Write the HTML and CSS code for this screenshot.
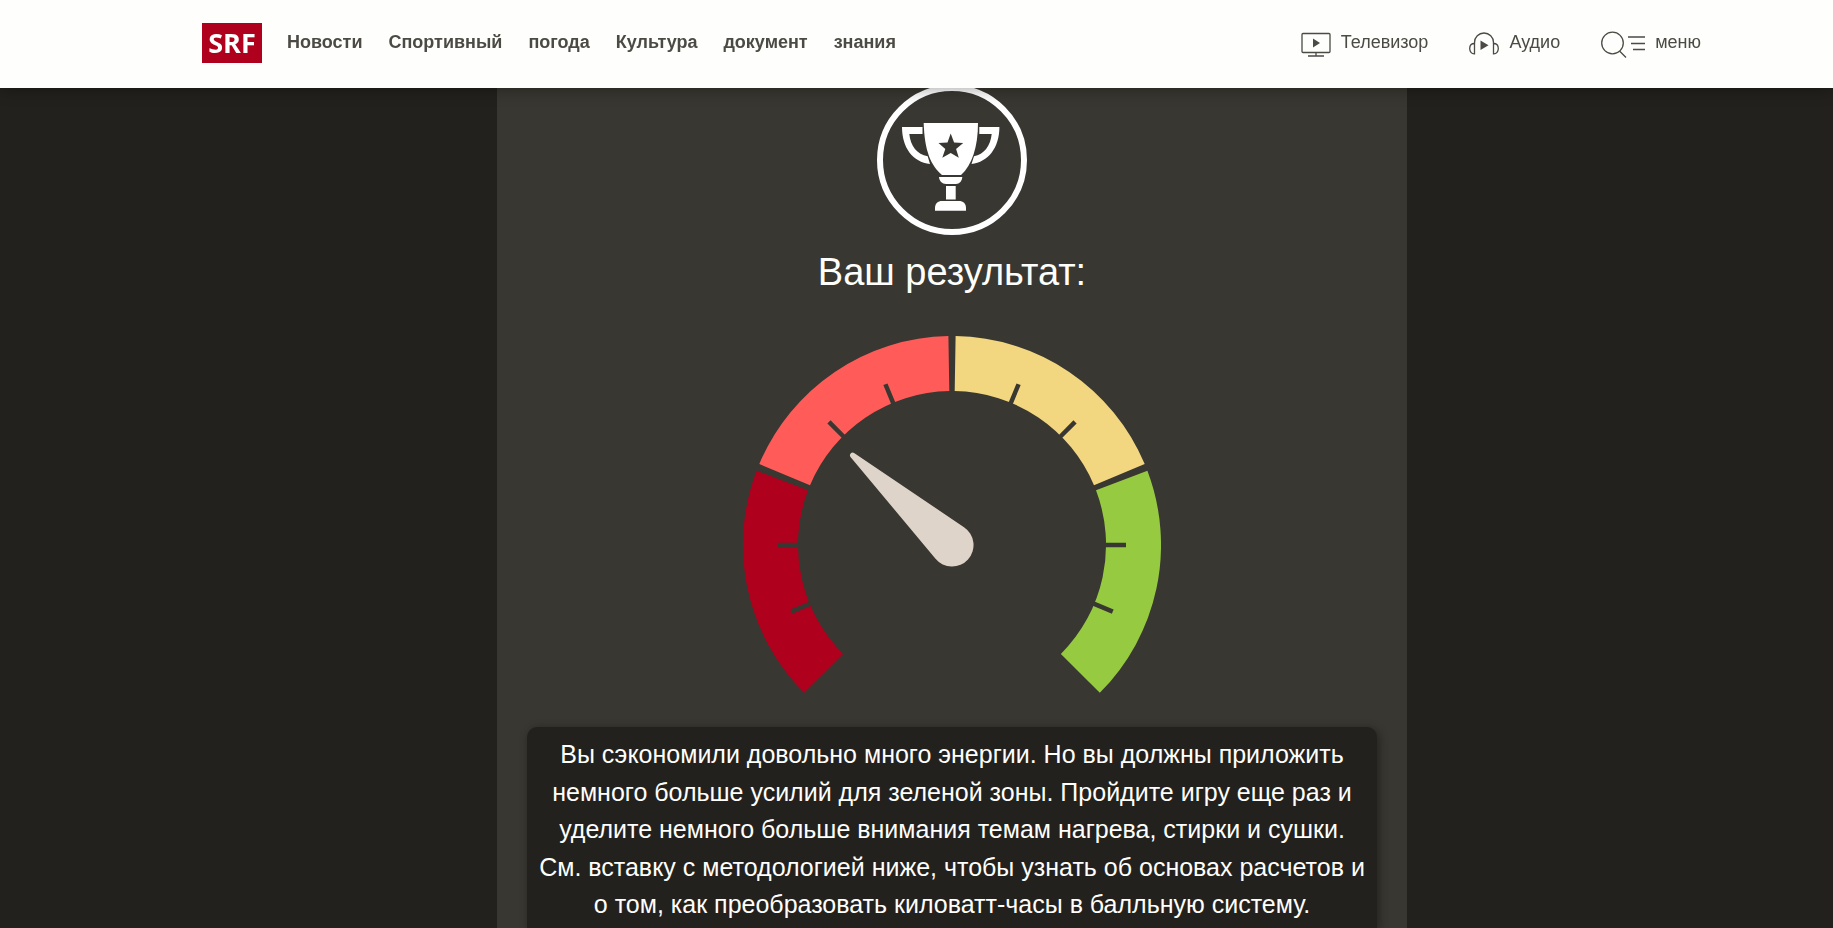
FILE: index.html
```
<!DOCTYPE html>
<html lang="ru">
  <head>
    <meta charset="UTF-8" />
    <meta name="viewport" content="width=device-width, initial-scale=1.0" />
    <title>SRF - Ваш результат</title>
    <link rel="stylesheet" href="styles.css">
  </head>
  <body>
    <header class="header">
      <div class="header-inner">
        <a class="logo" href="#">SRF</a>
        <nav class="main-nav">
          <a href="#">Новости</a>
          <a href="#">Спортивный</a>
          <a href="#">погода</a>
          <a href="#">Культура</a>
          <a href="#">документ</a>
          <a href="#">знания</a>
        </nav>
        <div class="tools">
          <a class="tool" href="#">
            <svg width="30" height="28" viewBox="0 0 30 28" fill="none" stroke="currentColor" stroke-width="1.300">
              <rect x="1" y="3.500" width="28" height="19" rx="1" />
              <path d="M15 22.500v3.500M7 26h16" />
              <path d="M12 8.500v9l7-4.500z" fill="currentColor" stroke="none" />
            </svg>
            <span>Телевизор</span>
          </a>
          <a class="tool" href="#">
            <svg width="30" height="28" viewBox="0 0 30 28" fill="none" stroke="currentColor" stroke-width="1.300">
              <path d="M5.500 13.500v-1a9.500 9.500 0 0 1 19 0v1" />
              <path d="M5.500 13.500v10.300C2.500 24 .7 21.500 .7 18.600s1.800-5.100 4.800-5.100z" />
              <path d="M24.500 13.500v10.300c3 .2 4.800-2.300 4.800-5.200s-1.800-5.100-4.800-5.100z" />
              <path d="M11.500 10.500v9.500l8-4.700z" fill="currentColor" stroke="none" />
            </svg>
            <span>Аудио</span>
          </a>
          <button class="tool" type="button">
            <svg width="44" height="28" viewBox="0 0 44 28" fill="none" stroke="currentColor" stroke-width="1.300">
              <circle cx="11.500" cy="13" r="10.800" />
              <path d="M18.500 21l6.500 6.500M27 7h17M30 13.500h14M32 19.500h12" />
            </svg>
            <span>меню</span>
          </button>
        </div>
      </div>
    </header>

    <main class="content">
      <section class="result">
        <svg class="trophy" width="150" height="150" viewBox="0 0 150 150" fill="#fff">
          <circle cx="75" cy="75" r="72" fill="none" stroke="#fff" stroke-width="6" />
          <path d="M25 42H45.500V49H32.300C33.500 61 40 69.500 50.700 71.300L53 79C36 77 25 63 25 42z" />
          <path d="M122.400 42H102.300V49H114.700C113.500 61 107 69.500 97 71.300L94.500 79C111 77 122.400 63 122.400 42z" />
          <path d="M46.700 38H101C101 62 95 80 84 90H65C54 81 47.500 66 46.700 38z" />
          <path d="M73.700 48.500L77.100 57.600L86.200 58.100L79.100 64L81.800 72.800L73.700 67.900L65.300 72.800L68.300 64L61.500 58.100L70.500 57.600z" fill="#393731" />
          <path d="M62 92H85.300C85 96 82.500 99 79 99H69C65 99 62.300 96 62 92z" />
          <path d="M69 101H78.700V114.500H69z" />
          <path d="M58 125.700V123C58 118.500 61 116 65 116H82C86 116 89 118.500 89 123V125.700z" />
        </svg>

        <h1>Ваш результат:</h1>

        <svg class="gauge" width="418" height="358" viewBox="-209 -209 418 358">
          <path fill="#af001d" d="M-147.800 147.800A209 209 0 0 1-195.400-74.200L-144-54.700A154 154 0 0 0-108.900 108.900z" />
          <path fill="#ff5c59" d="M-192.700-81A209 209 0 0 1-3.600-209L-2.700-154A154 154 0 0 0-142-59.700z" />
          <path fill="#f2d680" d="M3.600-209A209 209 0 0 1 192.700-81L142-59.700A154 154 0 0 0 2.700-154z" />
          <path fill="#96cb41" d="M195.400-74.200A209 209 0 0 1 147.800 147.800L108.900 108.900A154 154 0 0 0 144-54.700z" />
          <g stroke="#393731" stroke-width="4.500">
            <path d="M0-152V-174" transform="rotate(-112.500)" />
            <path d="M0-152V-174" transform="rotate(-90)" />
            <path d="M0-152V-174" transform="rotate(-45)" />
            <path d="M0-152V-174" transform="rotate(-22.500)" />
            <path d="M0-152V-174" transform="rotate(22.500)" />
            <path d="M0-152V-174" transform="rotate(45)" />
            <path d="M0-152V-174" transform="rotate(90)" />
            <path d="M0-152V-174" transform="rotate(112.500)" />
          </g>
          <path fill="#ded4ca" d="M-97.900-92L12-17.800A21.500 21.500 0 1 1-16.500 13.800L-101.500-88.100A2.700 2.700 0 0 1-97.900-92z" />
        </svg>

        <div class="message">
          <p>
            Вы сэкономили довольно много энергии. Но вы должны приложить немного
            больше усилий для зеленой зоны. Пройдите игру еще раз и уделите
            немного больше внимания темам нагрева, стирки и сушки. См. вставку с
            методологией ниже, чтобы узнать об основах расчетов и о том, как
            преобразовать киловатт-часы в балльную систему.
          </p>
        </div>
      </section>
    </main>
  </body>
</html>
```

FILE: styles.css
```
* {
  margin: 0;
  padding: 0;
  box-sizing: border-box;
}

body {
  font-family: "Liberation Sans", Arial, sans-serif;
  background-color: #23211d;
  color: #fefefc;
  height: 100vh;
  overflow: hidden;
}

.header {
  position: fixed;
  top: 0;
  left: 0;
  right: 0;
  height: 88px;
  padding-left: 71px;
  background-color: #fefefc;
  box-shadow: 0 0 16px rgba(0, 0, 0, 0.4);
  z-index: 10;
}

.header-inner {
  display: flex;
  align-items: center;
  max-width: 1500px;
  height: 86px;
  margin: 0 auto;
  font-size: 18px;
  line-height: 24px;
}

.logo {
  width: 60px;
  height: 40px;
  background-color: #af001d;
  color: #fff;
  font-family: "Open Sans", sans-serif;
  font-size: 27px;
  font-weight: bold;
  line-height: 40px;
  text-align: center;
  text-decoration: none;
}

.main-nav {
  display: flex;
  gap: 26px;
  margin-left: 25px;
  padding-bottom: 2px;
}

.main-nav a {
  color: #4b4a44;
  font-weight: bold;
  text-decoration: none;
}

.tools {
  display: flex;
  gap: 41px;
  margin-left: auto;
  padding: 2px 1px 0 0;
}

.tool {
  display: flex;
  align-items: center;
  gap: 10px;
  border: none;
  background: none;
  color: #4b4a44;
  font: inherit;
  text-decoration: none;
  cursor: pointer;
}

.tool span {
  padding-bottom: 4px;
}

.content {
  height: 100%;
  padding-left: 71px;
}

.result {
  display: flex;
  flex-direction: column;
  align-items: center;
  max-width: 910px;
  height: 100%;
  margin: 0 auto;
  padding: 85px 30px 0;
  background-color: #393731;
}

.trophy,
.gauge {
  flex-shrink: 0;
}

h1 {
  margin-top: 14px;
  font-size: 38px;
  font-weight: normal;
  line-height: 46px;
}

.gauge {
  margin-top: 41px;
}

.message {
  flex: 1;
  width: 100%;
  margin-top: 33px;
  padding: 9px 10px 0;
  border-radius: 10px 10px 0 0;
  background-color: #23211d;
  box-shadow: 2px 2px 10px rgba(0, 0, 0, 0.4);
  font-size: 25px;
  line-height: 1.5;
  text-align: center;
}
```
